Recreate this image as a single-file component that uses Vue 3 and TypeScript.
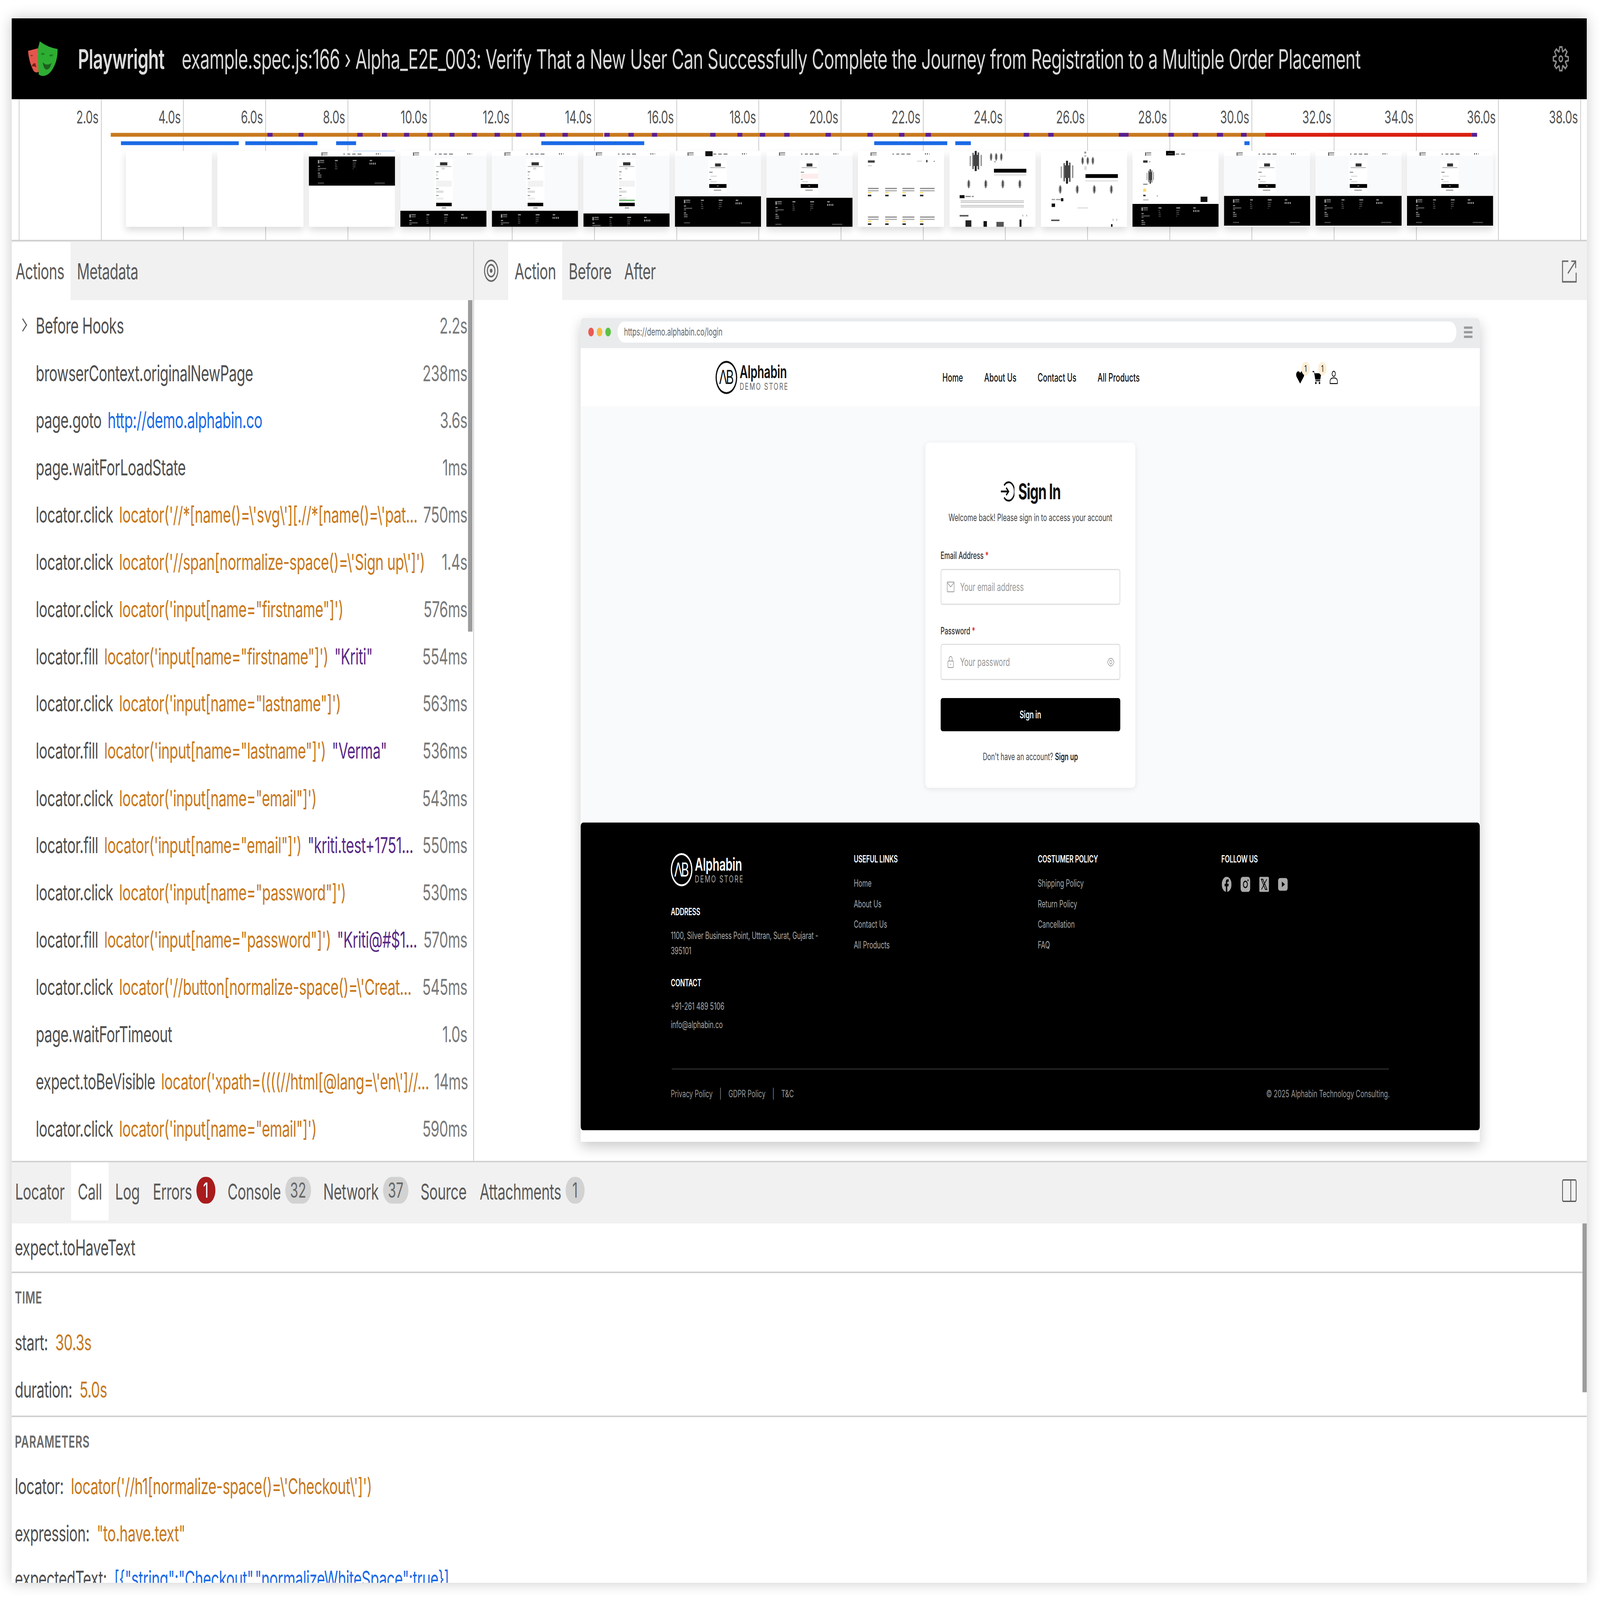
<script setup lang="ts">
type R = [number, number, number, number, string]

const fit = { transform: `scale(${window.innerWidth / 6574}, ${window.innerHeight / 4190})` }

const ticks = ['2.0s','4.0s','6.0s','8.0s','10.0s','12.0s','14.0s','16.0s','18.0s','20.0s','22.0s','24.0s','26.0s','28.0s','30.0s','32.0s','34.0s','36.0s','38.0s']

const OX = 48
const purple: [number, number][] = [[1099,1120],[1227,1247],[1468,1490],[1569,1590],[1660,1681],[1756,1777],[1847,1867],[1939,1959],[2032,2054],[2120,2142],[2218,2239],[2311,2333],[2483,2505],[2582,2604],[2679,2700],[2918,2940],[3030,3050],[3122,3144],[3222,3244],[3392,3414],[3564,3586],[3694,3716],[3803,3825],[4206,4228],[4307,4329],[4597,4637],[4801,4823],[4900,4923],[5000,5025],[5099,5122],[6047,6069]]
const blue: [number, number][] = [[497,981],[1008,1304],[1381,1463],[2224,2647],[3592,3892],[3925,3989],[5113,5134]]
const seg = (a: number, b: number) => ({ left: a - OX + 'px', width: b - a + 'px' })

function nav(): R[] {
  return [[52,4,4,9,'#555'],[57,4,20,3,'#888'],[57,9,20,3,'#aaa'],[142,7,6,3,'#888'],[158,7,12,3,'#888'],[178,7,14,3,'#888'],[200,7,16,3,'#888'],[276,6,3,4,'#444'],[284,6,3,4,'#444'],[292,6,3,4,'#aaa']]
}
function footer(top: number, bottom = 199): R[] {
  return [[0,top,354,bottom-top,'#000'],[37,top+9,6,9,'#999'],[45,top+9,18,3,'#777'],[45,top+14,18,3,'#555'],[37,top+24,9,3,'#888'],[37,top+30,34,3,'#555'],[37,top+34,9,3,'#555'],[37,top+42,9,3,'#888'],[37,top+47,15,3,'#666'],[37,top+52,15,3,'#666'],[107,top+9,12,3,'#999'],[107,top+16,6,2,'#555'],[107,top+21,8,2,'#555'],[107,top+26,10,2,'#555'],[107,top+31,10,2,'#555'],[180,top+9,16,3,'#999'],[180,top+16,14,2,'#555'],[180,top+21,12,2,'#555'],[180,top+26,12,2,'#555'],[180,top+31,4,2,'#555'],[250,top+9,10,3,'#999'],[250,top+16,3,5,'#ccc'],[257,top+16,3,5,'#ccc'],[264,top+16,3,5,'#ccc'],[271,top+16,3,5,'#ccc'],[37,top+68,25,3,'#444'],[270,top+68,42,3,'#444']]
}
function login(dy = 0): R[] {
  return [[0,13,354,105+dy,'#f9fafb'],[137,25,75,84+dy,'#fff'],[165,33,24,8,'#333'],[145,43,62,2,'#aaa'],[141,55,14,2,'#777'],[141,60,72,13,'#fff'],[146,65,26,3,'#ddd'],[141,74,8,2,'#777'],[146,80,26,2,'#ccc'],[141,87,71,10,'#000'],[172,91,8,2,'#999'],[160,102,30,2,'#777']]
}
function signup(end: number, top = 30): R[] {
  return [[0,13,354,end-13,'#f9fafb'],[141,top-10,75,end-top-3,'#fff'],[163,top,30,8,'#333'],[147,top+10,62,2,'#aaa'],[170,top+14,12,5,'#ddd'],[147,top+24,10,2,'#777'],[147,top+31,6,5,'#ddd'],[147,top+42,10,2,'#777'],[147,top+48,64,16,'#f2f2f2'],[147,top+68,10,2,'#777'],[147,top+74,30,6,'#ddd'],[147,top+86,10,2,'#777'],[147,top+92,30,6,'#eee'],[147,top+106,64,9,'#000'],[170,top+118,18,3,'#999']]
}
function plant(x: number, y: number, h: number, w: number): R[] {
  return [[x+w*.42,y,w*.16,h,'#222'],[x+w*.22,y+h*.1,w*.12,h*.8,'#666'],[x+w*.66,y+h*.08,w*.12,h*.84,'#555'],[x,y+h*.25,w*.1,h*.5,'#999'],[x+w*.9,y+h*.2,w*.1,h*.55,'#888'],[x+w*.32,y+h*.2,w*.4,h*.55,'#444']]
}
function products(y: number): R[] {
  const out: R[] = []
  for (const [x, w] of [[41,44],[112,48],[183,49],[255,60]]) {
    out.push([x,y,w,3,'#888'],[x,y+6,w,3,'#aaa'],[x,y+11,14,3,'#ffd966'],[x,y+18,14,4,'#222'])
  }
  return out
}
function product1(): R[] {
  const o: R[] = []
  o.push(...plant(83,0,53,50),...plant(165,6,20,12),...plant(186,6,20,12),...plant(207,6,20,12))
  o.push([183,47,133,10,'#000'],[183,60,133,6,'#e8e8e8'],[183,27,8,3,'#aaa'])
  for (const x of [72,142,212,282]) o.push(...plant(x,76,22,14))
  o.push([42,116,20,8,'#111'],[66,118,22,3,'#888'],[92,118,8,3,'#888'])
  for (const y of [130,134,142,146]) o.push([46,y,260,2,'#bbb'])
  o.push([42,168,36,4,'#555'],[300,167,3,5,'#aaa'],[316,167,3,5,'#aaa'])
  o.push([66,182,24,17,'#222'],[140,184,14,15,'#111'],[193,186,30,13,'#555'],[288,180,8,19,'#111'])
  return o
}
function product2(): R[] {
  const o: R[] = []
  o.push(...plant(81,26,60,52),...plant(165,16,20,12),...plant(186,16,20,12),...plant(207,16,20,12))
  o.push([178,2,8,5,'#999'],[178,12,8,3,'#aaa'],[178,40,10,10,'#ddd'],[183,61,133,10,'#000'],[183,76,133,5,'#e8e8e8'])
  for (const x of [72,142,212,282]) o.push(...plant(x,90,22,14))
  o.push([44,126,14,3,'#999'],[62,126,18,3,'#999'],[82,124,10,8,'#111'],[44,138,14,9,'#111'],[150,148,44,3,'#ddd'],[42,180,34,4,'#555'],[295,178,3,5,'#aaa'],[310,178,3,5,'#aaa'],[288,192,6,7,'#111'])
  return o
}
function cart(): R[] {
  const o: R[] = []
  o.push([44,25,18,6,'#333'],[68,27,6,3,'#aaa'],...plant(58,48,38,30),[44,86,18,3,'#888'],[44,99,12,8,'#ffd966'],[44,115,10,4,'#333'],[100,116,4,4,'#aaa'],[44,127,22,3,'#bbb'],[280,120,28,14,'#111'])
  o.push([138,0,36,12,'#000'],[146,6,20,1,'#888'])
  return o
}

const thumbs: R[][] = [
  [],
  [],
  [...nav(),[0,15,354,76,'#000'],...footer(15,91),[182,0,172,1,'#6fa8e8']],
  [...signup(157),...nav(),...footer(157)],
  [...signup(157),...nav(),...footer(157)],
  [...signup(164),...nav(),[147,128,64,3,'#4caf50'],...footer(164)],
  [...nav(),...login(0),[125,1,30,13,'#111'],...footer(119)],
  [...nav(),...login(5),[141,60,72,13,'#fdecec'],...footer(123)],
  [...nav(),[41,25,28,6,'#444'],[243,26,20,2,'#ccc'],[280,24,6,6,'#444'],[312,26,3,3,'#555'],[41,38,16,2,'#bbb'],...products(97),...products(172)],
  [...product1()],
  [...product2()],
  [...nav().slice(0,7),...cart(),...footer(139)],
  [...nav(),...login(0),...footer(118,196)],
  [...nav(),...login(0),...footer(118,196)],
  [...nav(),...login(0),...footer(118,196)],
]

interface Row { name: string; sel?: string; link?: string; val?: string; time: string; chevron?: boolean }
const rows: Row[] = [
  { name: 'Before Hooks', time: '2.2s', chevron: true },
  { name: 'browserContext.originalNewPage', time: '238ms' },
  { name: 'page.goto', link: 'http://demo.alphabin.co', time: '3.6s' },
  { name: 'page.waitForLoadState', time: '1ms' },
  { name: 'locator.click', sel: String.raw`locator('//*[name()=\'svg\'][.//*[name()=\'pat...`, time: '750ms' },
  { name: 'locator.click', sel: String.raw`locator('//span[normalize-space()=\'Sign up\']')`, time: '1.4s' },
  { name: 'locator.click', sel: `locator('input[name="firstname"]')`, time: '576ms' },
  { name: 'locator.fill', sel: `locator('input[name="firstname"]')`, val: '"Kriti"', time: '554ms' },
  { name: 'locator.click', sel: `locator('input[name="lastname"]')`, time: '563ms' },
  { name: 'locator.fill', sel: `locator('input[name="lastname"]')`, val: '"Verma"', time: '536ms' },
  { name: 'locator.click', sel: `locator('input[name="email"]')`, time: '543ms' },
  { name: 'locator.fill', sel: `locator('input[name="email"]')`, val: '"kriti.test+1751...', time: '550ms' },
  { name: 'locator.click', sel: `locator('input[name="password"]')`, time: '530ms' },
  { name: 'locator.fill', sel: `locator('input[name="password"]')`, val: '"Kriti@#$1...', time: '570ms' },
  { name: 'locator.click', sel: String.raw`locator('//button[normalize-space()=\'Creat...`, time: '545ms' },
  { name: 'page.waitForTimeout', time: '1.0s' },
  { name: 'expect.toBeVisible', sel: String.raw`locator('xpath=((((//html[@lang=\'en\']//...`, time: '14ms' },
  { name: 'locator.click', sel: `locator('input[name="email"]')`, time: '590ms' },
]

const bottomTabs = [
  { label: 'Locator' }, { label: 'Call', active: true }, { label: 'Log' },
  { label: 'Errors', badge: '1', error: true }, { label: 'Console', badge: '32' },
  { label: 'Network', badge: '37' }, { label: 'Source' }, { label: 'Attachments', badge: '1' },
]
const locatorText = String.raw`locator('//h1[normalize-space()=\'Checkout\']')`
const expectedText = `[{"string":"Checkout","normalizeWhiteSpace":true}]`
const usefulLinks = ['Home','About Us','Contact Us','All Products']
const policyLinks = ['Shipping Policy','Return Policy','Cancellation','FAQ']
</script>

<template>
  <div class="stage">
  <div class="page" :style="fit">
    <div class="win">
      <header class="hdr">
        <svg class="pw" viewBox="0 0 121 91" aria-hidden="true">
          <path d="M0 25 L41 18 L44 79 Q30 84 22 76 Q4 55 0 25Z" fill="#e2574c"/>
          <path d="M8 37 q7 -4 13 0 q-7 4 -13 0Z" fill="#a83228"/>
          <path d="M14 66 q6 -10 16 -9 l4 11 q-10 -5 -20 -2Z" fill="#7a2018"/>
          <path d="M41 18 Q46 6 48 0 Q80 16 121 20 Q121 45 108 63 Q90 88 64 90 Q50 90 44 86 Q38 50 41 18Z" fill="#2ead33"/>
          <path d="M52 33 q8 -6 17 0 q-9 5 -17 0Z M86 37 q8 -6 17 -1 q-8 6 -17 1Z" fill="#1b7f20"/>
          <path d="M60 54 Q76 66 96 56 Q88 76 72 73 Q63 70 60 54Z" fill="#1d5f1f"/>
        </svg>
        <span class="brand">Playwright</span>
        <span class="title">example.spec.js:166 › Alpha_E2E_003: Verify That a New User Can Successfully Complete the Journey from Registration to a Multiple Order Placement</span>
        <svg class="gear" viewBox="0 0 16 16" fill="#8a8a8a" aria-hidden="true"><path fill-rule="evenodd" d="M9.1 4.4L8.6 2H7.4l-.5 2.4-.7.3-2-1.3-.9.8 1.3 2-.2.7-2.4.5v1.2l2.4.5.3.8-1.3 2 .8.8 2-1.3.8.3.4 2.3h1.2l.5-2.4.8-.3 2 1.3.8-.8-1.3-2 .3-.8 2.3-.4V7.4l-2.4-.5-.3-.8 1.3-2-.8-.8-2 1.3-.7-.2zM9.4 1l.5 2.4L12 2.1l2 2-1.4 2.1 2.4.4v2.8l-2.4.5L14 12l-2 2-2.1-1.4-.5 2.4H6.6l-.5-2.4L4 13.9l-2-2 1.4-2.1L1 9.4V6.6l2.4-.5L2.1 4l2-2 2.1 1.4.4-2.4h2.8zm.6 7c0 1.1-.9 2-2 2s-2-.9-2-2 .9-2 2-2 2 .9 2 2zM8 9c.6 0 1-.4 1-1s-.4-1-1-1-1 .4-1 1 .4 1 1 1z"/></svg>
      </header>

      <section class="timeline">
        <div class="ticks">
          <div class="tick0"></div>
          <div v-for="t in ticks" :key="t" class="tick"><span>{{ t }}</span></div>
        </div>
        <div class="track">
          <i class="seg orange" :style="seg(455, 5198)"></i>
          <i class="seg red" :style="seg(5198, 6047)"></i>
          <i class="seg gapw" :style="seg(1564, 1568)"></i>
          <i class="seg gapw" :style="seg(2479, 2482)"></i>
          <i v-for="p in purple" :key="p[0]" class="seg purple" :style="seg(p[0], p[1])"></i>
        </div>
        <div class="track blue-track">
          <i v-for="p in blue" :key="p[0]" class="seg blue" :style="seg(p[0], p[1])"></i>
        </div>
        <div class="thumbs">
          <svg v-for="(t, i) in thumbs" :key="i" class="thumb" viewBox="0 0 354 199" aria-hidden="true">
            <rect v-for="(r, j) in t" :key="j" :x="r[0]" :y="r[1]" :width="r[2]" :height="r[3]" :fill="r[4]"/>
          </svg>
        </div>
      </section>

      <section class="split">
        <aside class="left">
          <div class="tabbar">
            <span class="tab active first">Actions</span>
            <span class="tab">Metadata</span>
          </div>
          <div class="list-wrap">
            <div class="list">
              <div v-for="(r, i) in rows" :key="i" class="row">
                <svg v-if="r.chevron" class="chev" viewBox="0 0 16 16" aria-hidden="true"><path d="M5.5 2.5 L11 8 L5.5 13.5" fill="none" stroke="#555" stroke-width="1.2"/></svg>
                <span class="nm">{{ r.name }}</span>
                <span v-if="r.link" class="lnk">{{ r.link }}</span>
                <span v-if="r.sel" class="sel">{{ r.sel }}</span>
                <span v-if="r.val" class="val">{{ r.val }}</span>
                <span class="dur">{{ r.time }}</span>
              </div>
            </div>
            <div class="sbar"><div class="sthumb"></div></div>
          </div>
        </aside>

        <main class="right">
          <div class="tabbar rtabs">
            <svg class="target" viewBox="0 0 16 16" aria-hidden="true"><circle cx="8" cy="8" r="7" fill="none" stroke="#666" stroke-width="1.1"/><circle cx="8" cy="8" r="4" fill="none" stroke="#666" stroke-width="1.1"/><circle cx="8" cy="8" r="1.4" fill="#666"/></svg>
            <span class="tab active">Action</span>
            <span class="tab">Before</span>
            <span class="tab">After</span>
            <svg class="ext" viewBox="0 0 16 16" aria-hidden="true"><path d="M7 1.5H1v13.500h14V9M6.500 9.500 14.500 1.500M10 1.500h4.500V6" fill="none" stroke="#666" stroke-width="1"/></svg>
          </div>
          <div class="preview">
            <div class="frame">
              <div class="chrome">
                <span class="dots"><i class="d r"></i><i class="d y"></i><i class="d g"></i></span>
                <span class="addr">https://demo.alphabin.co/login</span>
                <span class="burger"><i></i><i></i><i></i></span>
              </div>
              <nav class="site-nav">
                <div class="wm dark">
                  <span class="ab">ΛB</span>
                  <span class="wm-t"><b>Alphabin</b><small>DEMO STORE</small></span>
                </div>
                <div class="links">
                  <span>Home</span><span>About Us</span><span>Contact Us</span><span>All Products</span>
                </div>
                <div class="nav-ic">
                  <span class="ic-wrap">
                    <svg class="ic" viewBox="0 0 24 24" aria-hidden="true"><path d="M12 23 L2 11 C-1 5 4 1 8 1.500 C10 2 11 3 12 5 C13 3 14 2 16 1.500 C20 1 25 5 22 11Z" fill="#000"/></svg>
                    <em class="bdg">1</em>
                  </span>
                  <span class="ic-wrap">
                    <svg class="ic" viewBox="0 0 24 24" aria-hidden="true"><path d="M0 1h4l1.500 4H24l-3 11H7.500L4 3H0Z M8 17h13v2H8Z" fill="#000"/><circle cx="9" cy="22" r="2" fill="#000"/><circle cx="19" cy="22" r="2" fill="#000"/></svg>
                    <em class="bdg">1</em>
                  </span>
                  <svg class="ic" viewBox="0 0 24 24" aria-hidden="true"><circle cx="12" cy="6" r="4.500" fill="none" stroke="#000" stroke-width="1.600"/><path d="M2 23v-4c0-4 4-6 10-6s10 2 10 6v4Z" fill="none" stroke="#000" stroke-width="1.600"/></svg>
                </div>
              </nav>
              <div class="site-main">
                <div class="card">
                  <div class="signin-h">
                    <svg class="si" viewBox="0 0 24 24" aria-hidden="true"><path d="M6.500 5.500A10 10 0 1 1 6.500 18.500M1 12h13M10 8l4 4-4 4" fill="none" stroke="#111" stroke-width="2"/></svg>
                    <span>Sign In</span>
                  </div>
                  <p class="welcome">Welcome back! Please sign in to access your account</p>
                  <label class="lb l1">Email Address <i>*</i></label>
                  <div class="inp i1">
                    <svg class="iic" viewBox="0 0 24 24" aria-hidden="true"><rect x="2" y="3" width="20" height="18" rx="1" fill="none" stroke="#999" stroke-width="1.500"/><path d="M2.500 4 12 12 21.500 4" fill="none" stroke="#999" stroke-width="1.500"/></svg>
                    <span>Your email address</span>
                  </div>
                  <label class="lb l2">Password <i>*</i></label>
                  <div class="inp i2">
                    <svg class="iic" viewBox="0 0 24 24" aria-hidden="true"><rect x="4" y="10" width="16" height="12" rx="2" fill="none" stroke="#999" stroke-width="1.500"/><path d="M7.500 10V6a4.500 4.500 0 0 1 9 0v4" fill="none" stroke="#999" stroke-width="1.500"/><circle cx="12" cy="16" r="1.200" fill="#999"/></svg>
                    <span>Your password</span>
                    <svg class="eye" viewBox="0 0 24 24" aria-hidden="true"><path d="M2 12C5 6 8.500 4.500 12 4.500S19 6 22 12c-3 6-6.500 7.500-10 7.500S5 18 2 12Z" fill="none" stroke="#999" stroke-width="1.500"/><circle cx="12" cy="12" r="3.500" fill="none" stroke="#999" stroke-width="1.500"/></svg>
                  </div>
                  <div class="btn">Sign in</div>
                  <p class="have">Don't have an account? <b>Sign up</b></p>
                </div>
              </div>
              <footer class="site-footer">
                <div class="f-cols">
                  <div class="f-col c1">
                    <div class="wm light">
                      <span class="ab">ΛB</span>
                      <span class="wm-t"><b>Alphabin</b><small>DEMO STORE</small></span>
                    </div>
                    <h4 class="addr-h">ADDRESS</h4>
                    <p class="addr-t">1100, Silver Business Point, Uttran, Surat, Gujarat - 395101</p>
                    <h4 class="cont-h">CONTACT</h4>
                    <p class="cont-t">+91-261 489 5106</p>
                    <p class="cont-t2">info@alphabin.co</p>
                  </div>
                  <div class="f-col c2">
                    <h4>USEFUL LINKS</h4>
                    <ul><li v-for="l in usefulLinks" :key="l">{{ l }}</li></ul>
                  </div>
                  <div class="f-col c3">
                    <h4>COSTUMER POLICY</h4>
                    <ul><li v-for="l in policyLinks" :key="l">{{ l }}</li></ul>
                  </div>
                  <div class="f-col c4">
                    <h4>FOLLOW US</h4>
                    <div class="socials">
                      <svg viewBox="0 0 24 24" aria-hidden="true"><circle cx="12" cy="12" r="12" fill="#aaa"/><path d="M10 24V15H7v-4h3V8.500C10 5.500 12 4 14.500 4H17v4h-2c-1 0-1.500.5-1.500 1.500V11H17l-.6 4h-2.900v9Z" fill="#000"/></svg>
                      <svg viewBox="0 0 24 24" aria-hidden="true"><rect width="24" height="24" rx="6" fill="#aaa"/><circle cx="12" cy="12" r="5" fill="none" stroke="#000" stroke-width="2"/><circle cx="18.500" cy="5.500" r="1.400" fill="#000"/></svg>
                      <svg viewBox="0 0 24 24" aria-hidden="true"><rect width="24" height="24" rx="3" fill="#aaa"/><path d="M5 4h4l10 16h-4ZM18.500 4 5.500 20" fill="none" stroke="#000" stroke-width="1.500"/></svg>
                      <svg viewBox="0 0 24 24" aria-hidden="true"><rect y="2" width="24" height="20" rx="5" fill="#aaa"/><path d="M9.500 7.500v9l7.500-4.500Z" fill="#000"/></svg>
                    </div>
                  </div>
                </div>
                <div class="f-rule"></div>
                <div class="f-bottom">
                  <div class="f-legal"><span>Privacy Policy</span><span class="bar">|</span><span>GDPR Policy</span><span class="bar">|</span><span>T&amp;C</span></div>
                  <span>© 2025 Alphabin Technology Consulting.</span>
                </div>
              </footer>
              <div class="frame-end"></div>
            </div>
          </div>
        </main>
      </section>

      <section class="bottom">
        <div class="tabbar btabs">
          <span v-for="t in bottomTabs" :key="t.label" class="tab" :class="{ active: t.active }">
            {{ t.label }}<em v-if="t.badge" class="count" :class="{ err: t.error }">{{ t.badge }}</em>
          </span>
          <svg class="layout" viewBox="0 0 16 16" aria-hidden="true"><rect x="1" y="1" width="14" height="14" rx="1" fill="none" stroke="#555" stroke-width=".8"/><path d="M9.500 1v14" stroke="#555" stroke-width=".8"/></svg>
        </div>
        <div class="details">
          <div class="d-title">expect.toHaveText</div>
          <div class="d-sec">
            <div class="d-head">TIME</div>
            <div class="d-row"><span>start:</span><span class="sel">30.3s</span></div>
            <div class="d-row"><span>duration:</span><span class="sel">5.0s</span></div>
          </div>
          <div class="d-sec last">
            <div class="d-head">PARAMETERS</div>
            <div class="d-row"><span>locator:</span><span class="sel">{{ locatorText }}</span></div>
            <div class="d-row"><span>expression:</span><span class="sel">"to.have.text"</span></div>
            <div class="d-row tail"><span>expectedText:</span><span class="lnk">{{ expectedText }}</span></div>
          </div>
          <div class="d-scroll"></div>
        </div>
      </section>
    </div>
  </div>
  </div>
</template>

<style>
html, body { margin: 0; background: #fff; overflow: hidden; }
</style>

<style scoped>
.stage { width: 100vw; height: 100vh; overflow: hidden; }
.page { width: 6574px; height: 4190px; padding: 48px 0 0 48px; box-sizing: border-box; font-family: Inter, "Liberation Sans", sans-serif; overflow: hidden; background: #fff; transform-origin: 0 0; }
.win { width: 6472px; height: 4097px; background: #fff; display: flex; flex-direction: column; overflow: hidden; box-shadow: 0 0 44px rgba(0,0,0,.22); position: relative; }
.hdr { height: 212px; background: #000; display: flex; align-items: center; flex: none; color: #e3e3e3; }
.pw { width: 122px; height: 92px; margin-left: 67px; flex: none; }
.brand { font-size: 71px; font-weight: 600; margin-left: 83px; letter-spacing: -1px; color: #ddd; }
.title { font-size: 70px; margin-left: 71px; letter-spacing: -1px; white-space: nowrap; color: #d8d8d8; }
.gear { width: 76px; height: 76px; margin-left: auto; margin-right: 69px; flex: none; }

.timeline { height: 372px; flex: none; border-bottom: 4px solid #cfcfcf; box-sizing: border-box; position: relative; background: #fff; }
.ticks { position: absolute; inset: 0; display: flex; }
.tick0 { width: 32px; border-right: 3px solid #c8c8c8; box-sizing: border-box; flex: none; }
.tick { width: 337.700px; flex: none; border-right: 3px solid #c8c8c8; box-sizing: border-box; text-align: right; padding: 18px 10px 0 0; font-size: 46px; line-height: 56px; color: #555; letter-spacing: -.5px; }
.tick:first-of-type { width: 340px; }
.track { position: relative; height: 10px; margin-top: 88px; }
.blue-track { margin-top: 12px; }
.seg { position: absolute; top: 0; height: 10px; display: block; }
.orange { background: #c97a1f; }
.red { background: #d92010; }
.purple { background: #5a2090; }
.blue { background: #1a6ae6; }
.gapw { background: #fff; }
.thumbs { position: relative; display: flex; gap: 22px; padding-left: 469px; margin-top: 15px; }
.thumb { width: 354px; height: 199px; background: #fff; flex: none; box-shadow: 0 10px 22px rgba(0,0,0,.14); }

.split { flex: none; height: 2408px; display: flex; }
.left { width: 1900px; flex: none; border-right: 4px solid #cfcfcf; box-sizing: border-box; display: flex; flex-direction: column; overflow: hidden; }
.tabbar { height: 154px; flex: none; background: #f1f1f1; display: flex; align-items: stretch; font-size: 58px; color: #5a5a5a; box-sizing: border-box; padding-top: 2px; letter-spacing: -.8px; }
.tab { padding: 0 26px; display: flex; align-items: center; white-space: nowrap; }
.tab.first { padding-left: 16px; padding-right: 26px; }
.tab.active { background: #fff; }
.list-wrap { flex: 1; display: flex; min-height: 0; }
.list { flex: 1; min-width: 0; overflow: hidden; }
.row { height: 123.700px; display: flex; align-items: center; position: relative; padding-left: 99px; font-size: 58px; color: #4f4f4f; white-space: nowrap; gap: 25px; letter-spacing: -.9px; padding-right: 3px; box-sizing: border-box; }
.row .sel, .row .lnk, .row .val { letter-spacing: -.8px; }
.row .val, .row:nth-child(5) .sel, .row:nth-child(15) .sel, .row:nth-child(17) .sel { margin-right: -4px; }
.row:first-child { margin-top: 5px; }
.chev { position: absolute; left: 28px; top: 36px; width: 48px; height: 48px; }
.sel { color: #c8781c; }
.lnk { color: #1a6ae6; }
.val { color: #5a2a86; }
.dur { margin-left: auto; color: #7a7a7a; }
.sbar { width: 21px; flex: none; padding-right: 3px; box-sizing: border-box; }
.sthumb { width: 18px; height: 868px; background: #9c9c9c; }

.right { flex: 1; min-width: 0; display: flex; flex-direction: column; }
.target { width: 62px; height: 62px; margin: 44px 39px 0 39px; flex: none; }
.ext { width: 64px; height: 64px; margin: 44px 40px 0 auto; flex: none; }
.preview { flex: 1; background: #fff; padding: 47px 0 0 438px; overflow: hidden; }
.frame { width: 3694px; height: 2157px; background: #fff; display: flex; flex-direction: column; box-shadow: 0 14px 42px rgba(0,0,0,.2); border-radius: 10px 10px 0 0; color: #111; }
.chrome { height: 79px; background: #e9ebed; display: flex; align-items: center; flex: none; border-radius: 12px 12px 0 0; }
.dots { display: flex; gap: 12px; margin-left: 31px; width: 120px; flex: none; margin-top: -6px; }
.d { width: 23px; height: 23px; border-radius: 50%; display: block; }
.d.r { background: #ea5a50; } .d.y { background: #f5bb42; } .d.g { background: #5cc245; }
.addr { width: 3447px; height: 55px; margin-top: -6px; box-sizing: border-box; background: #fff; border-radius: 28px; padding-left: 27px; font-size: 28px; line-height: 55px; color: #666; flex: none; }
.burger { display: flex; flex-direction: column; gap: 6px; margin-left: 31px; margin-top: -6px; }
.burger i { display: block; width: 35px; height: 6px; background: #999; }
.site-nav { height: 152px; flex: none; display: flex; align-items: center; padding-left: 554px; box-sizing: border-box; background: #fff; }
.wm { display: flex; align-items: center; gap: 10px; flex: none; }
.site-nav .wm { width: 932px; }
.ab { width: 89px; height: 87px; border-radius: 50%; border: 5px solid currentColor; box-sizing: border-box; display: flex; align-items: center; justify-content: center; font-size: 50px; font-weight: 400; letter-spacing: -6px; padding-right: 6px; flex: none; }
.wm-t { display: flex; flex-direction: column; }
.wm-t b { font-size: 46px; line-height: 48px; font-weight: 600; letter-spacing: -.5px; }
.wm-t small { font-size: 25px; line-height: 30px; letter-spacing: 3.800px; color: #666; font-weight: 400; white-space: nowrap; }
.dark { color: #111; }
.light { color: #fff; }
.light .wm-t small { color: #aaa; }
.links { width: 1452px; flex: none; display: flex; gap: 87px; font-size: 30px; font-weight: 500; color: #111; }
.nav-ic { display: flex; align-items: center; gap: 33px; }
.ic-wrap { position: relative; display: flex; }
.ic { width: 36px; height: 36px; display: block; }
.bdg { position: absolute; right: -22px; top: -22px; width: 35px; height: 35px; border-radius: 50%; background: #fdeed6; font-size: 24px; line-height: 35px; text-align: center; font-style: normal; color: #222; }
.site-main { height: 1090px; flex: none; background: #f9fafb; display: flex; justify-content: center; padding-top: 95px; box-sizing: border-box; }
.card { width: 863px; height: 904px; background: #fff; border-radius: 14px; box-shadow: 0 4px 18px rgba(0,0,0,.08); padding: 93px 62px 0 63px; box-sizing: border-box; }
.signin-h { display: flex; align-items: center; justify-content: center; height: 70px; gap: 16px; font-size: 56px; font-weight: 700; letter-spacing: -1.800px; color: #111; }
.si { width: 58px; height: 58px; }
.welcome { margin: 13px 0 0; font-size: 26.500px; line-height: 40px; text-align: center; color: #444; white-space: nowrap; }
.lb { display: block; font-size: 26px; line-height: 36px; font-weight: 500; color: #333; }
.lb i { color: #e02020; font-style: normal; }
.l1 { margin-top: 62px; }
.l2 { margin-top: 50px; }
.inp { display: flex; align-items: center; border: 3px solid #dedede; border-radius: 8px; box-sizing: border-box; padding-left: 21px; gap: 22px; font-size: 29px; color: #999; }
.i1 { margin-top: 17px; height: 94px; }
.i2 { margin-top: 16px; height: 95px; }
.iic { width: 34px; height: 34px; flex: none; }
.eye { width: 32px; height: 32px; margin-left: auto; margin-right: 20px; }
.btn { margin-top: 47px; height: 87px; background: #000; border-radius: 8px; display: flex; align-items: center; justify-content: center; color: #fff; font-size: 27px; font-weight: 600; }
.have { margin: 47px 0 0; font-size: 26px; line-height: 40px; text-align: center; color: #444; }
.have b { font-weight: 600; color: #222; }
.site-footer { height: 806px; flex: none; background: #000; border-radius: 10px; box-sizing: border-box; padding: 80px 0 0 370px; color: #aaa; }
.f-cols { display: flex; height: 564px; }
.f-col h4 { margin: 0; font-size: 26px; line-height: 36px; font-weight: 600; color: #fff; white-space: nowrap; letter-spacing: -.3px; }
.c1 { width: 752px; flex: none; }
.c2 { width: 756px; flex: none; margin-top: -2px; }
.c3 { width: 754px; flex: none; margin-top: -2px; }
.c4 { margin-top: -2px; }
.f-col ul { list-style: none; margin: 25px 0 0; padding: 0; display: flex; flex-direction: column; gap: 14px; }
.f-col li { font-size: 26px; line-height: 40px; }
.c1 .addr-h { margin-top: 49px; }
.addr-t { margin: 24px 0 0; width: 630px; font-size: 26px; line-height: 40px; letter-spacing: -.2px; }
.c1 .cont-h { margin-top: 46px; }
.cont-t { margin: 23px 0 0; font-size: 26px; line-height: 40px; }
.cont-t2 { margin: 8px 0 0; font-size: 26px; line-height: 40px; }
.socials { display: flex; gap: 37px; margin: 28px 0 0 2px; }
.socials svg { width: 40px; height: 40px; display: block; }
.f-rule { width: 2946px; height: 3px; margin-left: 4px; background: #2c2c2c; }
.f-bottom { width: 2954px; margin-top: 43px; display: flex; justify-content: space-between; font-size: 26px; line-height: 40px; color: #999; }
.f-legal { display: flex; gap: 28px; }
.frame-end { height: 30px; flex: none; background: #fff; }

.bottom { flex: 1; min-height: 0; border-top: 4px solid #cfcfcf; display: flex; flex-direction: column; }
.btabs { height: 160px; padding: 0 0 8px; margin-left: -13px; }
.btabs .tab { padding: 0 27px; }
.count { min-width: 78px; box-sizing: border-box; margin-left: 18px; margin-right: -4px; height: 70px; padding: 0 20px; border-radius: 36px; background: #d2d2d2; color: #666; font-style: normal; font-size: 54px; line-height: 70px; text-align: center; letter-spacing: 0; margin-top: -6px; }
.count.err { background: #a81c1c; color: #fff; }
.layout { width: 64px; height: 64px; margin: 42px 40px 0 auto; flex: none; }
.details { flex: 1; min-height: 0; overflow: hidden; position: relative; font-size: 58px; color: #4f4f4f; letter-spacing: -.8px; }
.d-title { height: 130px; display: flex; align-items: center; padding-left: 13px; border-bottom: 4px solid #cfcfcf; box-sizing: border-box; }
.d-sec { border-bottom: 4px solid #cfcfcf; padding-bottom: 6px; }
.d-sec.last { border-bottom: 0; }
.d-head { height: 119px; padding: 8px 0 0 13px; box-sizing: border-box; display: flex; align-items: center; font-size: 44px; font-weight: 600; color: #6a6a6a; letter-spacing: 1px; }
.d-row { height: 124px; display: flex; align-items: center; gap: 30px; padding-left: 13px; white-space: nowrap; }
.tail { margin-top: -6px; }
.d-scroll { position: absolute; right: 0; top: -7px; width: 18px; height: 449px; background: #9c9c9c; }
</style>
